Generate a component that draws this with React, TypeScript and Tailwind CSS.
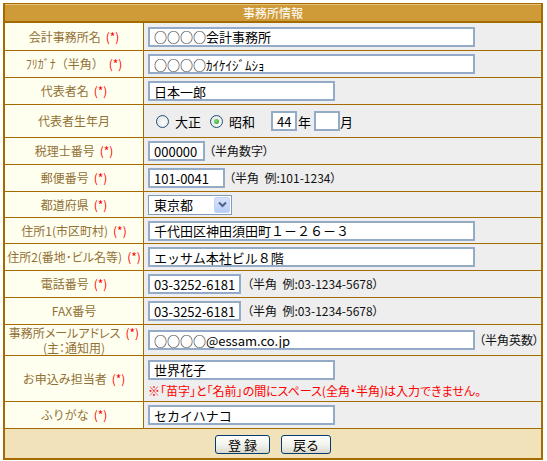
import React from "react";

const FONT = "[font-family:'Noto_Sans_CJK_JP','Noto_Sans',sans-serif]";

function Req() {
  return <span className="text-[#ff0000] ml-[5px]">(*)</span>;
}

function Box({ w, children }: { w: string; children?: React.ReactNode }) {
  return (
    <div
      className={`${w} h-[20px] shrink-0 border-2 border-[#93abc7] bg-white pl-[4px] flex items-center text-[13px] leading-none text-black whitespace-nowrap overflow-hidden`}
    >
      {children}
    </div>
  );
}

function Hint({ ml, children }: { ml: string; children: React.ReactNode }) {
  return (
    <span className={`${ml} text-[12px] leading-none text-[#111] whitespace-nowrap [font-feature-settings:'palt']`}>
      {children}
    </span>
  );
}

function Row({
  h,
  label,
  children,
}: {
  h: string;
  label: React.ReactNode;
  children: React.ReactNode;
}) {
  return (
    <div className={`flex ${h} border-b border-[#a36b00]`}>
      <div className="w-[139px] shrink-0 border-r border-[#a36b00] bg-[#fffff0] flex items-center justify-center text-center text-[12px] leading-[14px] text-[#927036]">
        {label}
      </div>
      <div className="flex-1 bg-[#eeeeee] pl-[4px] flex items-center text-[12px] text-[#111] whitespace-nowrap">
        {children}
      </div>
    </div>
  );
}

function Radio({ checked }: { checked?: boolean }) {
  return (
    <span className="w-[13px] h-[13px] rounded-full border border-[#1c5180] bg-[radial-gradient(circle_at_60%_60%,#ffffff,#dcdcd6)] flex items-center justify-center shrink-0">
      {checked && (
        <span className="w-[5px] h-[5px] rounded-full bg-[radial-gradient(circle_at_40%_40%,#7ee07e,#1f9a1f)]" />
      )}
    </span>
  );
}

function Btn({ w, children }: { w: string; children: React.ReactNode }) {
  return (
    <div
      className={`${w} h-[19px] rounded-[3px] border border-[#003c74] bg-[linear-gradient(#ffffff,#f0f0ea_60%,#d8d8cc)] flex items-center justify-center text-[13px] leading-none text-black`}
    >
      {children}
    </div>
  );
}

export default function App() {
  return (
    <div className={`w-[547px] h-[461px] bg-white pt-[3px] pl-[3px] ${FONT}`}>
      <div className="w-[540px] border-t border-r-2 border-l-2 border-b-2 border-[#a36b00]">
        <div className="h-[19px] border-b-2 border-[#a36b00] bg-[#cf9b38] border-t border-t-[#e7c27c] flex items-center justify-center text-white text-[12px] leading-none">
          事務所情報
        </div>

        <Row h="h-[28px]" label={<>会計事務所名<Req /></>}>
          <Box w="w-[327px]">○○○○会計事務所</Box>
        </Row>
        <Row h="h-[27px]" label={<>ﾌﾘｶﾞﾅ（半角）<Req /></>}>
          <Box w="w-[327px]">○○○○ｶｲｹｲｼﾞﾑｼｮ</Box>
        </Row>
        <Row h="h-[27px]" label={<>代表者名<Req /></>}>
          <Box w="w-[187px]">日本一郎</Box>
        </Row>
        <Row h="h-[33px]" label={<>代表者生年月</>}>
          <div className="flex items-center text-[13px] text-black leading-none">
            <span className="ml-[8px]"><Radio /></span>
            <span className="ml-[6px]">大正</span>
            <span className="ml-[9px]"><Radio checked /></span>
            <span className="ml-[6px]">昭和</span>
            <span className="ml-[16px]"><Box w="w-[26px]">44</Box></span>
            <span className="ml-[1px]">年</span>
            <span className="ml-[3px]"><Box w="w-[26px]"></Box></span>
            <span>月</span>
          </div>
        </Row>
        <Row h="h-[27px]" label={<>税理士番号<Req /></>}>
          <Box w="w-[57px]">000000</Box>
          <Hint ml="ml-[4px]">（半角数字）</Hint>
        </Row>
        <Row h="h-[27px]" label={<>郵便番号<Req /></>}>
          <Box w="w-[77px]">101-0041</Box>
          <Hint ml="ml-[4px]">（半角&nbsp;&nbsp;例:101-1234）</Hint>
        </Row>
        <Row h="h-[26px]" label={<>都道府県<Req /></>}>
          <div className="w-[84px] h-[20px] border border-[#7f9db9] bg-white flex items-center justify-between text-[13px] leading-none text-black">
            <span className="pl-[5px]">東京都</span>
            <span className="w-[16px] h-[16px] mr-[1px] rounded-[2px] bg-[linear-gradient(#d7e2fc,#b8cdf8)] border border-[#c3d3f6] flex items-center justify-center">
              <svg width="9" height="7" viewBox="0 0 9 7">
                <path d="M1 1.5 L4.5 5 L8 1.5" stroke="#4d6185" strokeWidth="2" fill="none" />
              </svg>
            </span>
          </div>
        </Row>
        <Row h="h-[26px]" label={<>住所1(市区町村)<Req /></>}>
          <Box w="w-[327px]">千代田区神田須田町１－２６－３</Box>
        </Row>
        <Row h="h-[27px]" label={<span className="[font-feature-settings:'palt'] whitespace-nowrap">住所2(番地･ビル名等)<Req /></span>}>
          <Box w="w-[327px]">エッサム本社ビル８階</Box>
        </Row>
        <Row h="h-[27px]" label={<>電話番号<Req /></>}>
          <Box w="w-[93px]">03-3252-6181</Box>
          <Hint ml="ml-[6px]">（半角&nbsp;&nbsp;例:03-1234-5678）</Hint>
        </Row>
        <Row h="h-[27px]" label={<>FAX番号</>}>
          <Box w="w-[93px]">03-3252-6181</Box>
          <Hint ml="ml-[6px]">（半角&nbsp;&nbsp;例:03-1234-5678）</Hint>
        </Row>
        <Row
          h="h-[31px]"
          label={
            <div className="flex flex-col items-center leading-[15px] [font-feature-settings:'palt']">
              <span className="whitespace-nowrap">事務所メールアドレス<Req /></span>
              <span>(主：通知用)</span>
            </div>
          }
        >
          <Box w="w-[327px]">○○○○@essam.co.jp</Box>
          <Hint ml="ml-[4px]">（半角英数）</Hint>
        </Row>
        <Row h="h-[46px]" label={<>お申込み担当者<Req /></>}>
          <div className="flex flex-col">
            <Box w="w-[187px]">世界花子</Box>
            <span className="mt-[4px] text-[12px] leading-[14px] text-[#ff0000] whitespace-nowrap [font-feature-settings:'palt']">
              ※「苗字」と「名前」の間にスペース(全角・半角)は入力できません。
            </span>
          </div>
        </Row>
        <Row h="h-[27px]" label={<>ふりがな<Req /></>}>
          <Box w="w-[187px]">セカイハナコ</Box>
        </Row>
        <div className="h-[29px] bg-[#f2e2b9] flex items-center justify-center gap-[11px] pt-[1px]">
          <Btn w="w-[55px]">登&nbsp;録</Btn>
          <Btn w="w-[50px]">戻る</Btn>
        </div>
      </div>
    </div>
  );
}
